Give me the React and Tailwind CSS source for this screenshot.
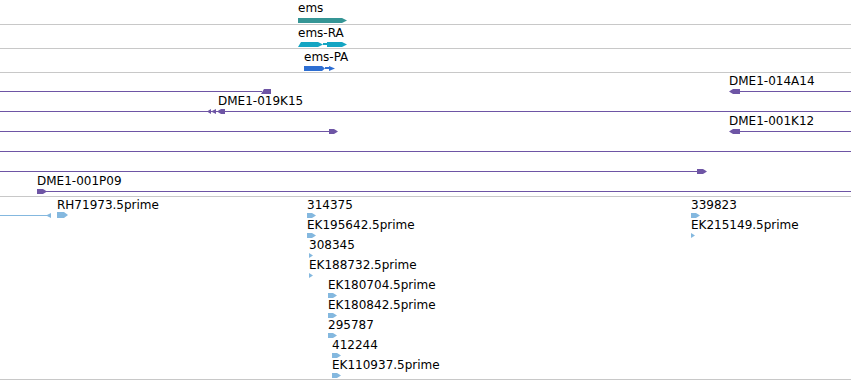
import React from 'react';

const PURPLE = '#6e55a5';
const LIGHT = '#84b8df';

// one feature glyph, drawn as svg
const Glyph = ({ w, h = 5, dir = 'r', color, tip = 4 }) => {
  let pts;
  if (dir === 'r') pts = `0,0 ${w - tip},0 ${w},${h / 2} ${w - tip},${h} 0,${h}`;
  else if (dir === 'l') pts = `${tip},0 ${w},0 ${w},${h} ${tip},${h} 0,${h / 2}`;
  else if (dir === 'tri') pts = `0,0 ${w},${h / 2} 0,${h}`;
  else if (dir === 'ltri') pts = `${w},0 0,${h / 2} ${w},${h}`;
  else pts = `0,${h} 3,0 ${w},0 ${w},${h}`;
  return (
    <svg className="block shrink-0" width={w} height={h}>
      <polygon points={pts} fill={color} />
    </svg>
  );
};

// a feature sits at its genome coordinate (x) inside its row
const Feature = ({ x, label, children, gap = '' }) => (
  <div className="absolute top-0 flex flex-col pt-px" style={{ left: x }}>
    <span className="h-[14px] whitespace-nowrap text-[12px] leading-[14px] text-black">{label}</span>
    <div className={`flex items-center h-[6px] ${gap}`}>{children}</div>
  </div>
);

// a horizontal line across a coordinate span
const Span = ({ x1, x2, color }) => (
  <div className="absolute top-[18px] h-px" style={{ left: x1, width: x2 - x1, background: color }} />
);

const Row = ({ children }) => <div className="relative h-[20px]">{children}</div>;

const ests = [
  [{ x: 307, label: '314375', w: 9 }, { x: 691, label: '339823', w: 9 }],
  [{ x: 307, label: 'EK195642.5prime', w: 9 }, { x: 691, label: 'EK215149.5prime', w: 4 }],
  [{ x: 309, label: '308345', w: 4 }],
  [{ x: 309, label: 'EK188732.5prime', w: 4 }],
  [{ x: 328, label: 'EK180704.5prime', w: 9 }],
  [{ x: 328, label: 'EK180842.5prime', w: 9 }],
  [{ x: 328, label: '295787', w: 9 }],
  [{ x: 332, label: '412244', w: 9 }],
  [{ x: 332, label: 'EK110937.5prime', w: 9 }],
];

export default function App() {
  return (
    <div className="w-[851px] h-[380px] bg-white overflow-hidden flex flex-col font-['DejaVu_Sans',sans-serif]">
      {/* gene / transcript tracks */}
      <div className="h-[25px] border-b border-[#c8c8c8] relative">
        <Feature x={298} label="ems" gap="mt-[2px]">
          <Glyph w={49} dir="r" color="#359595" tip={5} />
        </Feature>
      </div>
      <div className="h-[24px] border-b border-[#c8c8c8] relative">
        <Feature x={298} label="ems-RA" gap="mt-px">
          <Glyph w={20} dir="box" color="#14a5c3" />
          <Glyph w={5} dir="tri" color="#14a5c3" />
          <div className="w-[4px] h-[2px] bg-[#14a5c3]" />
          <Glyph w={20} dir="r" color="#14a5c3" tip={5} />
        </Feature>
      </div>
      <div className="h-[24px] border-b border-[#c8c8c8] relative">
        <Feature x={304} label="ems-PA" gap="mt-px">
          <Glyph w={21} dir="r" color="#2d6ed2" tip={3} />
          <div className="w-[4px] h-[2px] bg-[#2d6ed2]" />
          <Glyph w={6} dir="tri" color="#2d6ed2" />
        </Feature>
      </div>

      {/* BAC track */}
      <div className="h-[124px] border-b border-[#c8c8c8] flex flex-col">
        <Row>
          <Span x1={0} x2={262} color={PURPLE} />
          <Span x1={740} x2={851} color={PURPLE} />
          <Feature x={261} label="">
            <Glyph w={10} dir="box" color={PURPLE} />
          </Feature>
          <Feature x={729} label="DME1-014A14">
            <Glyph w={11} dir="l" color={PURPLE} />
          </Feature>
        </Row>
        <Row>
          <Span x1={0} x2={851} color={PURPLE} />
          <div className="absolute left-[207px] top-[16px] flex">
            <Glyph w={4} dir="ltri" color={PURPLE} />
            <Glyph w={5} dir="ltri" color={PURPLE} />
          </div>
          <Feature x={218} label="DME1-019K15">
            <div className="-ml-px">
              <Glyph w={8} dir="l" color={PURPLE} />
            </div>
          </Feature>
        </Row>
        <Row>
          <Span x1={0} x2={330} color={PURPLE} />
          <Span x1={740} x2={851} color={PURPLE} />
          <Feature x={329} label="">
            <Glyph w={9} dir="r" color={PURPLE} />
          </Feature>
          <Feature x={729} label="DME1-001K12">
            <Glyph w={11} dir="l" color={PURPLE} />
          </Feature>
        </Row>
        <Row>
          <Span x1={0} x2={851} color={PURPLE} />
        </Row>
        <Row>
          <Span x1={0} x2={698} color={PURPLE} />
          <Feature x={697} label="">
            <Glyph w={10} dir="r" color={PURPLE} />
          </Feature>
        </Row>
        <Row>
          <Span x1={45} x2={851} color={PURPLE} />
          <Feature x={37} label="DME1-001P09">
            <Glyph w={10} dir="r" color={PURPLE} />
          </Feature>
        </Row>
      </div>

      {/* EST track */}
      <div className="h-[183px] border-b border-[#c8c8c8] flex flex-col">
        <Row>
          <Span x1={0} x2={47} color={LIGHT} />
          <div className="absolute left-[46px] top-[16px]">
            <Glyph w={5} dir="ltri" color={LIGHT} />
          </div>
          <Feature x={57} label="RH71973.5prime">
            <Glyph w={11} h={6} dir="r" color={LIGHT} />
          </Feature>
          {ests[0].map((e) => (
            <Feature key={e.label} x={e.x} label={e.label}>
              <Glyph w={e.w} dir="r" color={LIGHT} />
            </Feature>
          ))}
        </Row>
        {ests.slice(1).map((row, i) => (
          <Row key={i}>
            {row.map((e) => (
              <Feature key={e.label} x={e.x} label={e.label}>
                <Glyph w={e.w} dir="r" color={LIGHT} />
              </Feature>
            ))}
          </Row>
        ))}
      </div>
    </div>
  );
}
